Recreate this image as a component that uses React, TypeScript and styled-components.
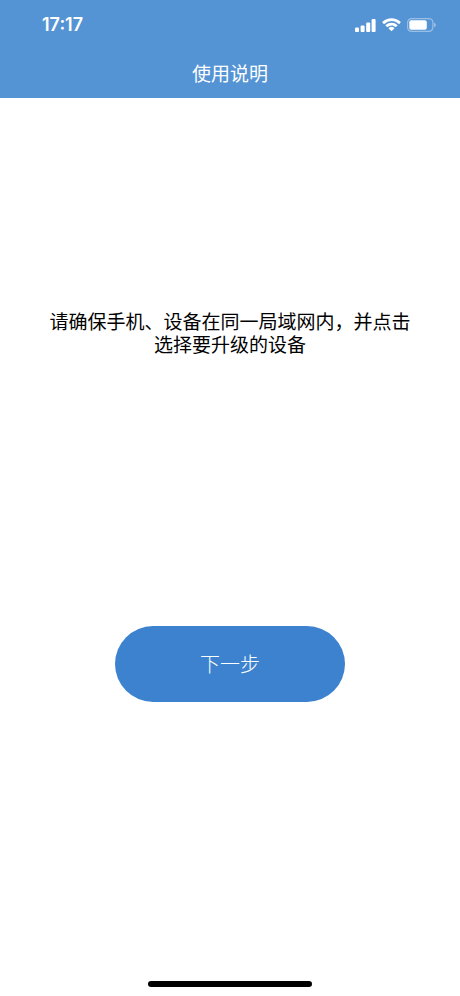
import React from "react";
import styled, { createGlobalStyle } from "styled-components";

const GlobalStyle = createGlobalStyle`
  * { box-sizing: border-box; }
  body {
    margin: 0;
    background: #fff;
    font-family: "Inter", "Noto Sans CJK SC", sans-serif;
  }
`;

const Screen = styled.div`
  min-height: 100vh;
  display: flex;
  flex-direction: column;
  background: #fff;
`;

const Header = styled.header`
  background: #5594d4;
  color: #fff;
`;

const StatusBar = styled.div`
  height: 50px;
  padding: 0 24px 0 42px;
  display: flex;
  align-items: center;
  justify-content: space-between;
`;

const Time = styled.time`
  font-size: 18px;
  line-height: 24px;
  font-weight: 600;
`;

const StatusIcons = styled.div`
  display: flex;
  align-items: center;
  gap: 6px;
`;

const Title = styled.h1`
  margin: 0;
  height: 48px;
  line-height: 50px;
  font-size: 19px;
  font-weight: 400;
  text-align: center;
`;

const Main = styled.main`
  flex: 1;
  display: flex;
  flex-direction: column;
  align-items: center;
  padding: 213px 40px 0;
`;

const Instruction = styled.p`
  margin: 0;
  max-width: 370px;
  font-size: 19px;
  line-height: 23px;
  color: #000;
  text-align: center;
`;

const NextButton = styled.button`
  margin-top: 269px;
  padding: 0 0 2px;
  width: 230px;
  height: 76px;
  border: 0;
  border-radius: 38px;
  background: #3c82ce;
  color: #fff;
  font: inherit;
  font-size: 20px;
  font-weight: 300;
  cursor: pointer;
`;

const HomeIndicator = styled.div`
  align-self: center;
  width: 164px;
  height: 6px;
  margin-bottom: 9px;
  border-radius: 3px;
  background: #000;
`;

function SignalIcon() {
  return (
    <svg width="21" height="14" viewBox="0 0 21 14" fill="#fff" role="img" aria-label="Signal">
      <rect x="0" y="9.4" width="4" height="4.6" rx="1" />
      <rect x="5.6" y="7.4" width="4" height="6.6" rx="1" />
      <rect x="11.2" y="4.6" width="4" height="9.4" rx="1" />
      <rect x="16.6" y="1" width="4" height="13" rx="1" />
    </svg>
  );
}

function WifiIcon() {
  return (
    <svg width="19" height="14" viewBox="0 0 17 12" fill="#fff" role="img" aria-label="Wi-Fi">
      <path d="M8.5 2.4c2.4 0 4.7.9 6.4 2.6.1.1.3.1.5 0l1.2-1.3a.4.4 0 0 0 0-.5 11.7 11.7 0 0 0-16.2 0 .4.4 0 0 0 0 .5L1.6 5c.2.1.4.1.5 0a9.2 9.2 0 0 1 6.4-2.6z" />
      <path d="M8.5 6.4c1.3 0 2.6.5 3.5 1.4.2.1.4.1.5 0l1.3-1.3a.4.4 0 0 0 0-.5 7.7 7.7 0 0 0-10.600 0 .4.4 0 0 0 0 .5l1.3 1.3c.1.1.3.1.5 0a5.200 5.200 0 0 1 3.500-1.400z" />
      <path d="M11 9.200a.4.4 0 0 0 0-.5 3.900 3.900 0 0 0-5 0 .4.4 0 0 0 0 .5l2.200 2.200c.2.2.4.2.6 0z" />
    </svg>
  );
}

function BatteryIcon() {
  return (
    <svg width="29" height="14" viewBox="0 0 29 14" role="img" aria-label="Battery">
      <rect x="0.6" y="0.6" width="25.3" height="12.8" rx="4" fill="none" stroke="#fff" strokeOpacity="0.4" strokeWidth="1.2" />
      <rect x="2.3" y="2.3" width="17.5" height="9.4" rx="2" fill="#fff" />
      <path d="M27.2 4.8v4.4c1-.4 1.5-1.2 1.5-2.2s-.5-1.8-1.5-2.2z" fill="#fff" fillOpacity="0.5" />
    </svg>
  );
}

export default function App() {
  return (
    <Screen>
      <GlobalStyle />
      <Header>
        <StatusBar>
          <Time>17:17</Time>
          <StatusIcons>
            <SignalIcon />
            <WifiIcon />
            <BatteryIcon />
          </StatusIcons>
        </StatusBar>
        <Title>使用说明</Title>
      </Header>
      <Main>
        <Instruction>请确保手机、设备在同一局域网内，并点击选择要升级的设备</Instruction>
        <NextButton type="button">下一步</NextButton>
      </Main>
      <HomeIndicator />
    </Screen>
  );
}
